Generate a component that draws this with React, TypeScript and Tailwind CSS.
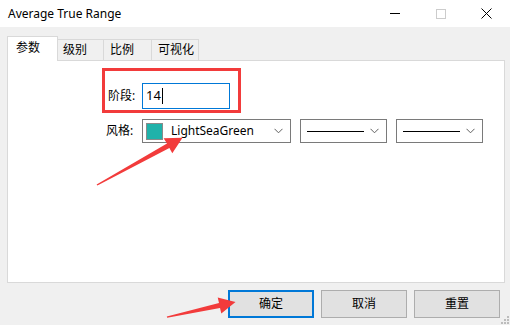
import React from "react";

const Chevron = () => (
  <svg width="9" height="6" viewBox="0 0 9 6" className="shrink-0">
    <path d="M0.5 0.8 L4.5 4.8 L8.5 0.8" fill="none" stroke="#606060" strokeWidth="1" />
  </svg>
);

export default function App() {
  const font = { fontFamily: '"Noto Sans", "Noto Sans CJK SC", sans-serif' };
  return (
    <div
      className="relative w-[510px] h-[325px] bg-[#f0f0f0] flex flex-col overflow-hidden text-[12px] text-black"
      style={font}
    >
      {/* Title bar */}
      <div className="h-[27px] bg-white flex items-center shrink-0">
        <div className="pl-[8px] flex-1 text-[12px] leading-none">Average True Range</div>
        <div className="w-[46px] h-[27px] flex items-center justify-center">
          <div className="w-[10px] h-px bg-black" />
        </div>
        <div className="w-[46px] h-[27px] flex items-center justify-center">
          <div className="w-[10px] h-[10px] border border-[#cccccc]" />
        </div>
        <div className="w-[46px] h-[27px] flex items-center justify-center pr-[1px]">
          <svg width="11" height="11" viewBox="0 0 11 11">
            <path d="M0.5 0.5 L10.5 10.5 M10.5 0.5 L0.5 10.5" stroke="#000" strokeWidth="1" />
          </svg>
        </div>
      </div>

      {/* Tabs */}
      <div className="mt-[9px] ml-[7px] flex items-end h-[25px] relative z-10">
        <div className="h-[25px] w-[51px] bg-white border border-[#d9d9d9] border-b-0 pl-[8px] pt-[2px] leading-[18px]">
          参数
        </div>
        <div className="h-[22px] w-[46px] bg-[#f0f0f0] border border-[#d9d9d9] border-l-0 pl-[5px] leading-[20px]">
          级别
        </div>
        <div className="h-[22px] w-[48px] bg-[#f0f0f0] border border-[#d9d9d9] border-l-0 pl-[6px] leading-[20px]">
          比例
        </div>
        <div className="h-[22px] w-[47px] bg-[#f0f0f0] border border-[#d9d9d9] border-l-0 pl-[6px] leading-[20px]">
          可视化
        </div>
      </div>

      {/* Panel */}
      <div className="-mt-px ml-[7px] w-[498px] h-[223px] bg-white border border-[#d9d9d9] flex flex-col">
        <div className="mt-[7px] ml-[94px] w-[139px] h-[45px] border-[3px] border-[#f23b3b] flex items-center pl-[3px] pt-[12px] pb-[1px]">
          <div className="w-[34px]">阶段:</div>
          <div className="w-[88px] h-[26px] border border-[#0078d7] flex items-center pl-[3px] text-[13px]">
            14<span className="w-px h-[16px] bg-black ml-[1px]" />
          </div>
        </div>
        <div className="mt-[6px] ml-[98px] flex items-center">
          <div className="w-[36px]">风格:</div>
          <div className="w-[149px] h-[24px] border border-[#7a7a7a] flex items-center pl-[3px] pr-[7px]">
            <div className="w-[17px] h-[17px] bg-[#20b2aa] border border-[#8a8a8a]" />
            <div className="ml-[8px] flex-1 text-[12px]">LightSeaGreen</div>
            <Chevron />
          </div>
          <div className="ml-[9px] w-[87px] h-[24px] border border-[#7a7a7a] flex items-center pl-[6px] pr-[7px]">
            <div className="w-[57px] h-px bg-black" />
            <div className="flex-1" />
            <Chevron />
          </div>
          <div className="ml-[9px] w-[87px] h-[24px] border border-[#7a7a7a] flex items-center pl-[6px] pr-[7px]">
            <div className="w-[57px] h-px bg-black" />
            <div className="flex-1" />
            <Chevron />
          </div>
        </div>
      </div>

      {/* Buttons */}
      <div className="mt-[7px] flex justify-end pr-[10px] gap-[7px]">
        <button className="w-[86px] h-[28px] bg-[#e1e1e1] border-2 border-[#0078d7] text-[12px]">确定</button>
        <button className="w-[86px] h-[28px] bg-[#e1e1e1] border border-[#adadad] text-[12px]">取消</button>
        <button className="w-[86px] h-[28px] bg-[#e1e1e1] border border-[#adadad] text-[12px]">重置</button>
      </div>

      {/* Resize grip */}
      <svg className="absolute right-[1px] bottom-[1px]" width="8" height="8" viewBox="0 0 8 8">
        <rect x="6" y="0" width="2" height="2" fill="#bcbcbc" />
        <rect x="3" y="3" width="2" height="2" fill="#bcbcbc" />
        <rect x="6" y="3" width="2" height="2" fill="#bcbcbc" />
        <rect x="0" y="6" width="2" height="2" fill="#bcbcbc" />
        <rect x="3" y="6" width="2" height="2" fill="#bcbcbc" />
        <rect x="6" y="6" width="2" height="2" fill="#bcbcbc" />
      </svg>

      {/* Annotation arrows */}
      <svg className="absolute left-0 top-0 pointer-events-none" width="510" height="325" viewBox="0 0 510 325">
        <polygon
          points="96.6,184.5 167,143.5 163.6,138.2 182.5,137.8 172.3,153.2 169.4,148.1 97.4,185.6"
          fill="#f23b3b"
        />
        <polygon
          points="166.8,316.4 219,303 217.7,297.5 235.5,302 221.3,313.5 220,308 167.2,317.7"
          fill="#f23b3b"
        />
      </svg>
    </div>
  );
}
